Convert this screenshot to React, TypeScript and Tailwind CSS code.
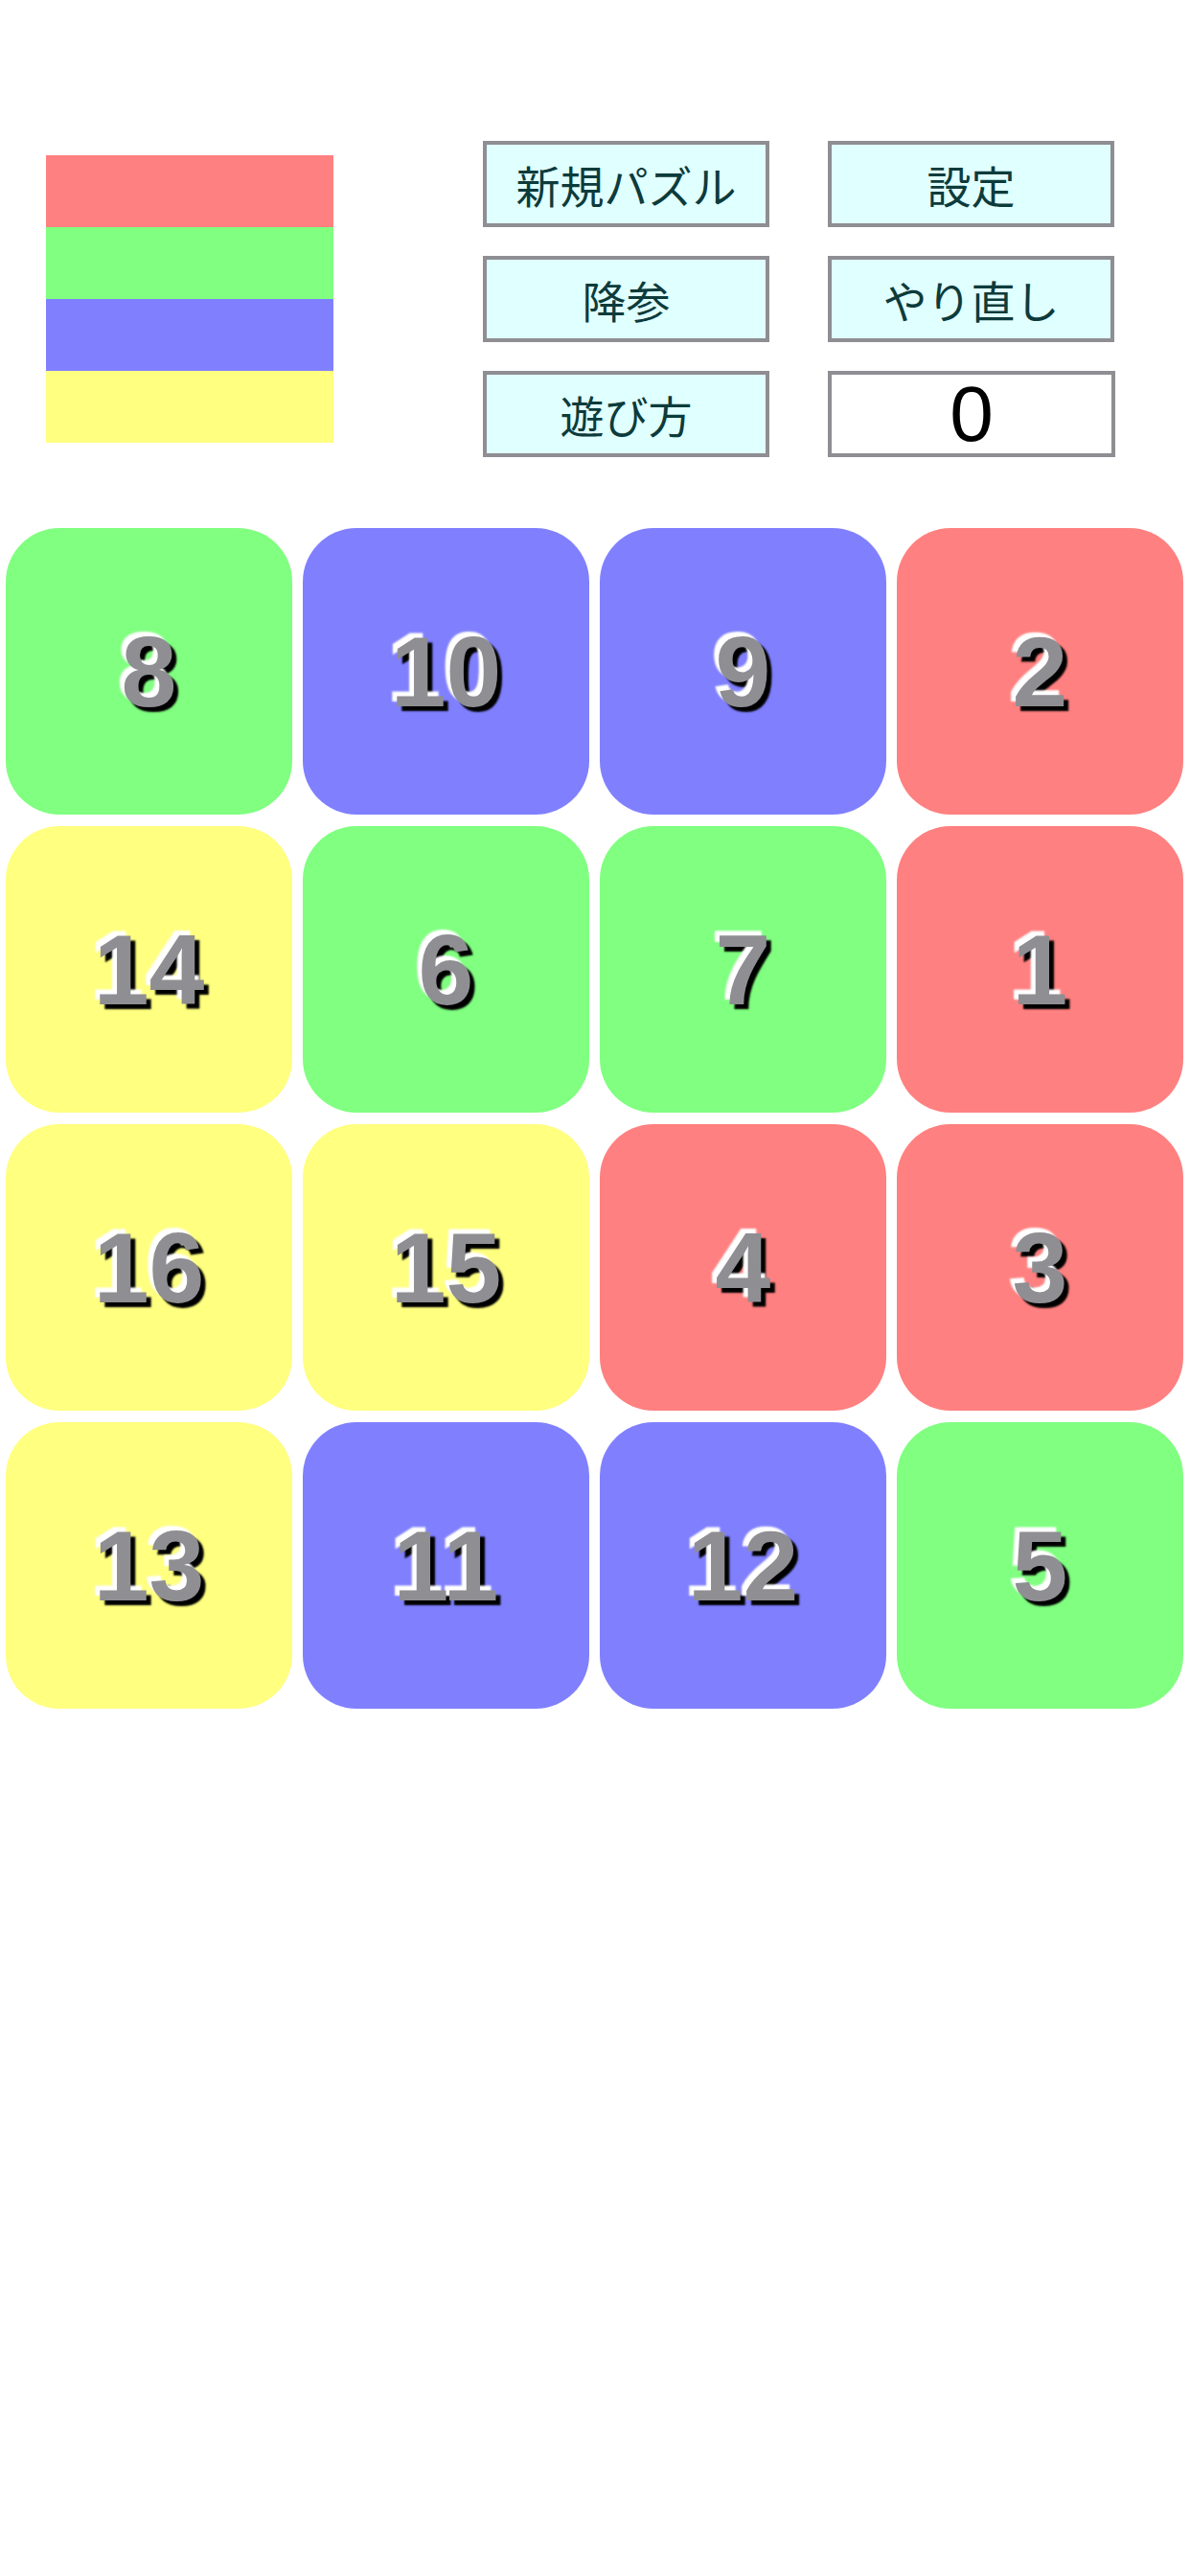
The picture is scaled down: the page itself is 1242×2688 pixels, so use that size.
const tiles: { n: number; c: string }[] = [
  { n: 8, c: "bg-[#80ff80]" },
  { n: 10, c: "bg-[#8080ff]" },
  { n: 9, c: "bg-[#8080ff]" },
  { n: 2, c: "bg-[#ff8080]" },
  { n: 14, c: "bg-[#ffff80]" },
  { n: 6, c: "bg-[#80ff80]" },
  { n: 7, c: "bg-[#80ff80]" },
  { n: 1, c: "bg-[#ff8080]" },
  { n: 16, c: "bg-[#ffff80]" },
  { n: 15, c: "bg-[#ffff80]" },
  { n: 4, c: "bg-[#ff8080]" },
  { n: 3, c: "bg-[#ff8080]" },
  { n: 13, c: "bg-[#ffff80]" },
  { n: 11, c: "bg-[#8080ff]" },
  { n: 12, c: "bg-[#8080ff]" },
  { n: 5, c: "bg-[#80ff80]" },
];

const buttons = ["新規パズル", "設定", "降参", "やり直し", "遊び方"];

function MenuButton({ label }: { label: string }) {
  return (
    <button className="w-[299px] h-[90px] border-4 border-[#8e8e93] bg-[#e0ffff] text-[#0d3b3b] text-[46px] leading-none flex items-center justify-center [font-family:'Noto_Sans_CJK_JP',sans-serif]">
      {label}
    </button>
  );
}

export default function App() {
  return (
    <div className="w-[1242px] min-h-[2688px] bg-white">
      {/* 上部: 色の見本とメニュー */}
      <div className="flex items-center pt-[147px] pl-[48px]">
        <div className="flex flex-col w-[300px]">
          <div className="h-[75px] bg-[#ff8080]"></div>
          <div className="h-[75px] bg-[#80ff80]"></div>
          <div className="h-[75px] bg-[#8080ff]"></div>
          <div className="h-[75px] bg-[#ffff80]"></div>
        </div>
        <div className="ml-[156px] grid grid-cols-[300px_300px] gap-x-[60px] gap-y-[30px]">
          {buttons.map((b) => (
            <MenuButton key={b} label={b} />
          ))}
          <div className="w-[300px] h-[90px] border-4 border-[#8e8e93] bg-white flex items-center justify-center text-black text-[82px] leading-none [font-family:'Liberation_Sans',sans-serif]">
            0
          </div>
        </div>
      </div>

      {/* パズル盤 */}
      <div className="mt-[74px] pl-[6px] grid grid-cols-[299px_299px_299px_299px] gap-x-[11px] gap-y-[12px]">
        {tiles.map((t) => (
          <div
            key={t.n}
            className={`${t.c} w-[299px] h-[299px] rounded-[56px] flex items-center justify-center`}
          >
            <span className="text-[104px] font-bold leading-none text-[#8e8e93] [font-family:'Liberation_Sans',Arial,sans-serif] [text-shadow:-5px_-5px_2px_#ffffff,5px_5px_2px_#000000]">
              {t.n}
            </span>
          </div>
        ))}
      </div>
    </div>
  );
}
